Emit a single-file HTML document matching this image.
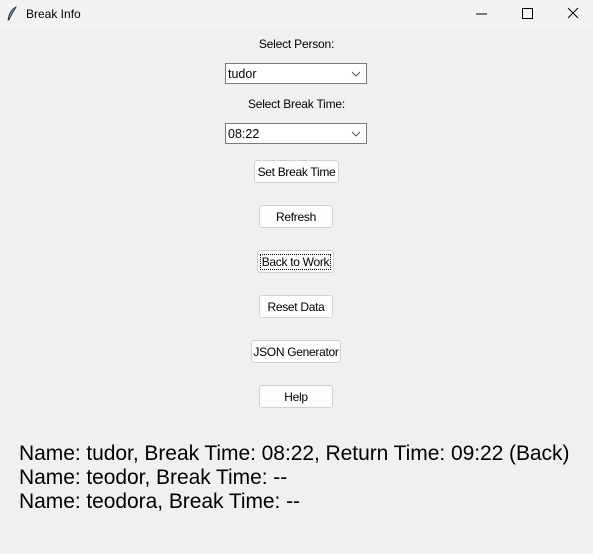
<!DOCTYPE html>
<html><head><style>
body{margin:0;width:593px;height:554px;background:#f0f0f0;font-family:"Liberation Sans",sans-serif;position:relative;overflow:hidden}
.tb{position:absolute;left:0;top:0;width:593px;height:29px;background:#f3f3f3}
.a{position:absolute}
.lbl{position:absolute;font-size:12px;color:#000;width:593px;text-align:center;letter-spacing:-0.2px}
.cb{position:absolute;left:225px;width:138px;height:19px;background:#fff;border:1px solid #7a7a7a;font-size:12.5px;line-height:20px;padding-left:2px;box-sizing:content-box}
.btn{position:absolute;background:#fdfdfd;border:1px solid #d0d0d0;border-radius:3px;font-size:12px;line-height:22px;text-align:center;box-sizing:border-box;height:23px;white-space:nowrap;letter-spacing:-0.3px}
.big{position:absolute;left:19px;font-size:21px;white-space:nowrap;letter-spacing:-0.05px}
</style></head><body>
<div class="tb"></div>
<svg class="a" style="left:6px;top:6px" width="12" height="16" viewBox="0 0 12 16"><path d="M10 1 C6 3 3 7 2 14 L3 14 C5 9 8 5 10 1Z" fill="#6a9ad8" stroke="#222" stroke-width="0.8"/></svg>
<div class="a" style="left:26px;top:7px;font-size:12px">Break Info</div>
<svg class="a" style="left:470px;top:6px" width="110" height="16"><path d="M6 8h11" stroke="#000" stroke-width="1"/><rect x="52.5" y="2.5" width="10" height="10" fill="none" stroke="#000"/><path d="M98 2l10 10M108 2l-10 10" stroke="#000"/></svg>
<div class="lbl" style="top:37px;left:0">Select Person:</div>
<div class="cb" style="top:63px">tudor</div>
<div class="lbl" style="top:97px;left:0">Select Break Time:</div>
<div class="cb" style="top:123px">08:22</div>
<svg class="a" style="left:351px;top:70px" width="10" height="8"><path d="M1 2l4 4 4-4" fill="none" stroke="#555"/></svg>
<svg class="a" style="left:351px;top:130px" width="10" height="8"><path d="M1 2l4 4 4-4" fill="none" stroke="#555"/></svg>
<div class="btn" style="left:254px;top:160px;width:85px">Set Break Time</div>
<div class="btn" style="left:259px;top:205px;width:74px">Refresh</div>
<div class="btn" style="left:257px;top:250px;width:77px"><span style="outline:1px dotted #000;padding:0 1px">Back to Work</span></div>
<div class="btn" style="left:259px;top:295px;width:74px">Reset Data</div>
<div class="btn" style="left:251px;top:340px;width:90px">JSON Generator</div>
<div class="btn" style="left:259px;top:385px;width:74px">Help</div>
<div class="big" style="top:442px">Name: tudor, Break Time: 08:22, Return Time: 09:22 (Back)</div>
<div class="big" style="top:466px">Name: teodor, Break Time: --</div>
<div class="big" style="top:490px">Name: teodora, Break Time: --</div>
</body></html>
